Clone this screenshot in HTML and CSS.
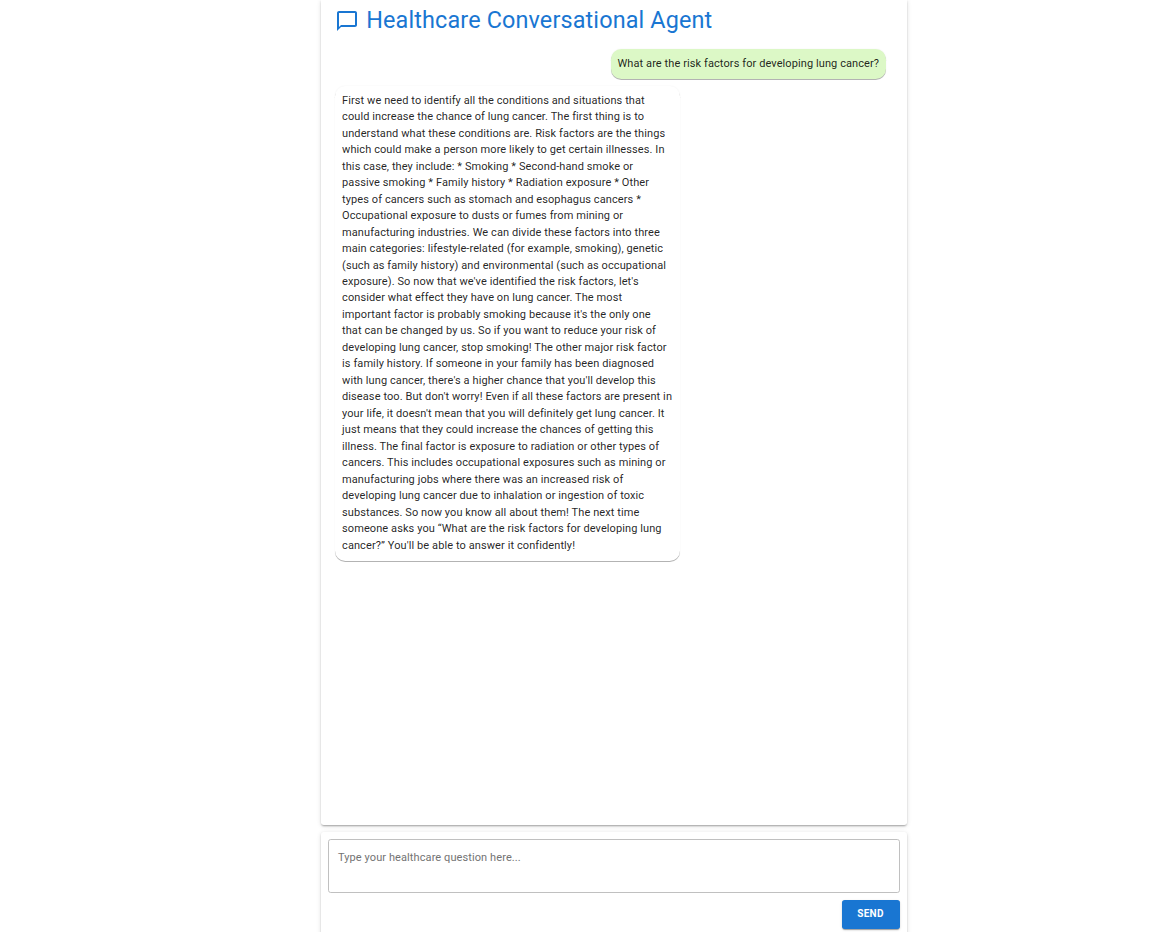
FILE: index.html
```html
<!DOCTYPE html>
<html lang="en">
<head>
<meta charset="utf-8">
<title>Healthcare Conversational Agent</title>
<link rel="stylesheet" href="styles.css">
</head>
<body>
<main class="app">
  <section class="card chat">
    <h1 class="title">
      <svg class="title-icon" viewBox="0 0 24 24" aria-hidden="true"><path d="M20 2H4c-1.100 0-2 .9-2 2v18l4-4h14c1.100 0 2-.9 2-2V4c0-1.100-.9-2-2-2zm0 14H6l-2 2V4h16v12z"/></svg>
      <span>Healthcare Conversational Agent</span>
    </h1>
    <div class="messages">
      <p class="bubble user">What are the risk factors for developing lung cancer?</p>
      <p class="bubble agent">First we need to identify all the conditions and situations that could increase the chance of lung cancer. The first thing is to understand what these conditions are. Risk factors are the things which could make a person more likely to get certain illnesses. In this case, they include: * Smoking * Second-hand smoke or passive smoking * Family history * Radiation exposure * Other types of cancers such as stomach and esophagus cancers * Occupational exposure to dusts or fumes from mining or manufacturing industries. We can divide these factors into three main categories: lifestyle-related (for example, smoking), genetic (such as family history) and environmental (such as occupational exposure). So now that we've identified the risk factors, let's consider what effect they have on lung cancer. The most important factor is probably smoking because it's the only one that can be changed by us. So if you want to reduce your risk of developing lung cancer, stop smoking! The other major risk factor is family history. If someone in your family has been diagnosed with lung cancer, there's a higher chance that you'll develop this disease too. But don't worry! Even if all these factors are present in your life, it doesn't mean that you will definitely get lung cancer. It just means that they could increase the chances of getting this illness. The final factor is exposure to radiation or other types of cancers. This includes occupational exposures such as mining or manufacturing jobs where there was an increased risk of developing lung cancer due to inhalation or ingestion of toxic substances. So now you know all about them! The next time someone asks you “What are the risk factors for developing lung cancer?” You'll be able to answer it confidently!</p>
    </div>
  </section>
  <form class="card composer">
    <textarea class="question" placeholder="Type your healthcare question here..."></textarea>
    <button class="send" type="button">SEND</button>
  </form>
</main>
</body>
</html>
```

FILE: styles.css
```css
* { box-sizing: border-box; }

body {
  margin: 0;
  height: 932px;
  overflow: hidden;
  background: #fff;
  color: rgba(0, 0, 0, 0.87);
  font-family: Roboto, sans-serif;
  font-size: 11px;
  line-height: 16.475px;
  letter-spacing: 0.092px;
}

.app {
  display: flex;
  flex-direction: column;
  gap: 7px;
  width: 586px;
  margin-left: 321px;
}

.card {
  background: #fff;
  border-radius: 2.75px;
  box-shadow: 0 2px 2px -1px rgba(0, 0, 0, 0.2), 0 1px 2px rgba(0, 0, 0, 0.14), 0 1px 5px rgba(0, 0, 0, 0.12);
}

.chat {
  height: 825px;
  padding: 5px 21px 0 14.2px;
  border-radius: 0 0 2.75px 2.75px;
}

.title {
  display: flex;
  align-items: center;
  gap: 7px;
  height: 30px;
  margin: 0 0 14px;
  color: #1976d2;
  font-size: 23.4px;
  font-weight: 400;
  line-height: 29px;
  letter-spacing: 0.14px;
}

.title-icon {
  width: 24px;
  height: 24px;
  margin-top: 2px;
  fill: currentColor;
}

.messages {
  display: flex;
  flex-direction: column;
  gap: 6.85px;
}

.bubble {
  max-width: 344.4px;
  margin: 0;
  padding: 6.85px;
  border-radius: 10.3px;
  box-shadow: 0 1px 0 rgba(0, 0, 0, 0.29), 0 0 2px rgba(0, 0, 0, 0.06);
}

.user { align-self: flex-end; background: #dcf8c6; }
.agent { align-self: flex-start; background: #fff; }

.composer {
  display: flex;
  flex-direction: column;
  align-items: flex-end;
  gap: 7px;
  height: 120px;
  padding: 7px;
}

.question {
  display: block;
  width: 100%;
  height: 54px;
  padding: 9.5px 9px;
  border: 1px solid #c0c0c0;
  border-radius: 2.75px;
  outline: 0;
  resize: none;
  background: transparent;
  color: inherit;
  font: inherit;
  letter-spacing: inherit;
}

.question::placeholder { color: #737373; opacity: 1; }

.send {
  width: 58px;
  height: 29px;
  padding: 0 1px 2px 0;
  border: 0;
  border-radius: 2.75px;
  background: #1976d2;
  color: #fff;
  font: 700 10px/17px Roboto, sans-serif;
  letter-spacing: 0.3px;
  box-shadow: 0 2px 1px -1px rgba(0, 0, 0, 0.2), 0 1px 1px rgba(0, 0, 0, 0.14), 0 1px 3px rgba(0, 0, 0, 0.12);
}
```
